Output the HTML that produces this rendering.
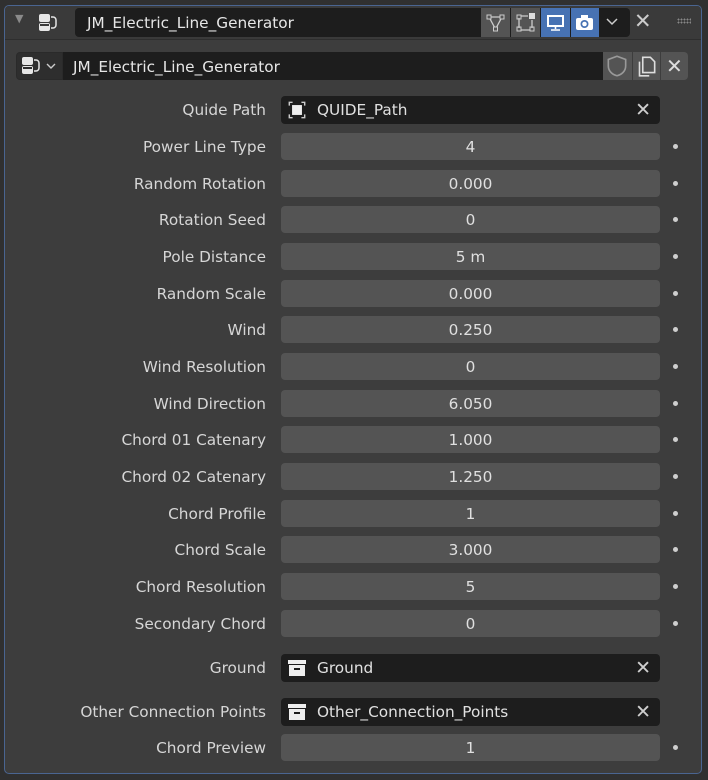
<!DOCTYPE html>
<html><head><meta charset="utf-8"><style>
*{box-sizing:border-box;margin:0;padding:0}
body{width:708px;height:780px;background:#303030;font-family:"DejaVu Sans","Liberation Sans",sans-serif;font-size:15.3px;color:#dcdcdc;position:relative;overflow:hidden}
.a{position:absolute}
.panel{left:4px;top:5px;width:698px;height:769px;background:#3d3d3d;border:1px solid #4a6591;border-radius:5px}
.hdr{left:5px;top:6px;width:696px;height:34px;background:#3a3a3a;border-bottom:1px solid #2e2e2e;border-radius:4px 4px 0 0}
.dark{background:#1d1d1d;border-radius:4px}
.btn{background:#545454}
.blue{background:#4772b3}
.lbl{position:absolute;right:442px;text-align:right;white-space:nowrap;color:#d6d6d6;line-height:29px}
.fld{position:absolute;left:281px;width:379px;height:27px;background:#545454;border-radius:4px;text-align:center;line-height:29px;color:#e0e0e0}
.dot{position:absolute;left:673px;width:5px;height:5px;border-radius:50%;background:#cfcfcf}
.tf{position:absolute;left:281px;width:379px;height:28px;background:#1d1d1d;border-radius:4px;line-height:29px;padding-left:36px;color:#e0e0e0}
.x{position:absolute;right:9px;top:0;color:#cfcfcf;font-size:19px;line-height:28px}
</style></head><body>
<div class="a panel"></div>
<div class="a hdr"></div>
<div class="a" style="left:15px;top:12px;color:#8a8a8a;font-size:11px">▼</div>
<svg class="a" style="left:36px;top:11px" width="24" height="24" viewBox="0 0 24 24"><rect x="3" y="3" width="11" height="8" rx="2" fill="#e6e6e6"/><rect x="3" y="12" width="11" height="8" rx="2" fill="#e6e6e6"/><rect x="4" y="13" width="9" height="2" fill="#3a3a3a"/><path d="M15 6h2a3 3 0 0 1 3 3v5a3 3 0 0 1-3 3h-2" stroke="#e6e6e6" stroke-width="1.5" fill="none"/></svg>
<div class="a dark" style="left:75px;top:8px;width:555px;height:29px;"></div>
<div class="a" style="left:87px;top:9px;line-height:29px;color:#e6e6e6">JM_Electric_Line_Generator</div>
<div class="a btn" style="left:481px;top:8px;width:29px;height:29px"></div>
<svg class="a" style="left:483px;top:10px" width="25" height="25" viewBox="0 0 25 25"><path d="M6 7L19 7L12.5 19Z" stroke="#ccc" stroke-width="1.3" fill="none"/><rect x="4" y="5" width="4" height="4" fill="#545454" stroke="#ccc"/><rect x="17" y="5" width="4" height="4" fill="#545454" stroke="#ccc"/><rect x="10.5" y="17" width="4" height="4" fill="#545454" stroke="#ccc"/></svg>
<div class="a btn" style="left:511px;top:8px;width:29px;height:29px"></div>
<svg class="a" style="left:513px;top:10px" width="25" height="25" viewBox="0 0 25 25"><path d="M6 8V18M8 20H17M8 6H15M19 10V18" stroke="#ccc" stroke-width="1.3"/><rect x="4" y="5" width="4" height="4" fill="none" stroke="#ccc"/><rect x="4" y="17" width="4" height="4" fill="none" stroke="#ccc"/><rect x="17" y="17" width="4" height="4" fill="none" stroke="#ccc"/><rect x="16" y="3" width="6" height="6" fill="#ddd"/></svg>
<div class="a blue" style="left:541px;top:8px;width:29px;height:29px"></div>
<svg class="a" style="left:543px;top:10px" width="25" height="25" viewBox="0 0 25 25"><rect x="5" y="6" width="15" height="10" fill="none" stroke="#fff" stroke-width="2"/><path d="M12.5 16v3M8 20h9" stroke="#fff" stroke-width="1.6"/></svg>
<div class="a blue" style="left:571px;top:8px;width:28px;height:29px"></div>
<svg class="a" style="left:572px;top:10px" width="25" height="25" viewBox="0 0 25 25"><rect x="4" y="8" width="17" height="12" rx="2" fill="#fff"/><rect x="9" y="5" width="7" height="4" fill="#fff"/><circle cx="12.5" cy="14" r="4" fill="#4772b3"/><circle cx="12.5" cy="14" r="2.3" fill="#fff"/></svg>
<svg class="a" style="left:604px;top:15px" width="16" height="14" viewBox="0 0 16 14"><path d="M3 4l5 5 5-5" stroke="#ccc" stroke-width="1.5" fill="none"/></svg>
<div class="a" style="left:634px;top:9px;font-size:21px;color:#ccc">✕</div>
<div class="a" style="left:677px;top:18px;width:14px;height:6px;background-image:radial-gradient(#888 45%,transparent 50%);background-size:3px 3px"></div>

<div class="a" style="left:16px;top:52px;width:47px;height:28px;background:#2e2e2e;border-radius:4px 0 0 4px;border:1px solid #2a2a2a"></div>
<svg class="a" style="left:19px;top:54px" width="24" height="24" viewBox="0 0 24 24"><rect x="3" y="3" width="11" height="8" rx="2" fill="#e6e6e6"/><rect x="3" y="12" width="11" height="8" rx="2" fill="#e6e6e6"/><rect x="4" y="13" width="9" height="2" fill="#2e2e2e"/><path d="M15 6h2a3 3 0 0 1 3 3v5a3 3 0 0 1-3 3h-2" stroke="#e6e6e6" stroke-width="1.5" fill="none"/></svg>
<svg class="a" style="left:45px;top:60px" width="12" height="12" viewBox="0 0 12 12"><path d="M2 4l4 4 4-4" stroke="#ccc" stroke-width="1.4" fill="none"/></svg>
<div class="a" style="left:63px;top:52px;width:540px;height:28px;background:#1d1d1d"></div>
<div class="a" style="left:73px;top:53px;line-height:28px;color:#e6e6e6">JM_Electric_Line_Generator</div>
<div class="a btn" style="left:603px;top:52px;width:29px;height:28px"></div>
<svg class="a" style="left:604px;top:53px" width="26" height="26" viewBox="0 0 24 24"><path d="M12 3L20 6V12C20 17 16 20 12 21C8 20 4 17 4 12V6Z" stroke="#999" stroke-width="1.5" fill="none"/></svg>
<div class="a btn" style="left:633px;top:52px;width:27px;height:28px"></div>
<svg class="a" style="left:633px;top:53px" width="26" height="26" viewBox="0 0 24 24"><path d="M9 4h7l4 4v10h-11z" stroke="#ddd" stroke-width="1.5" fill="none"/><path d="M6 8v13h9" stroke="#ddd" stroke-width="1.5" fill="none"/></svg>
<div class="a btn" style="left:661px;top:52px;width:27px;height:28px;border-radius:0 4px 4px 0"></div>
<div class="a" style="left:666px;top:54px;font-size:20px;color:#ddd">✕</div>

<div class="lbl" style="top:96px">Quide Path</div>
<div class="tf" style="top:96px">QUIDE_Path<span class="x">✕</span></div>
<svg class="a" style="left:286px;top:99px" width="22" height="22" viewBox="0 0 20 20"><path d="M3 6V3h3M14 3h3v3M17 14v3h-3M6 17H3v-3" stroke="#ccc" stroke-width="1.3" fill="none"/><rect x="5.5" y="5.5" width="9" height="9" fill="#eee"/></svg>

<div class="lbl" style="top:133px">Power Line Type</div><div class="fld" style="top:133px">4</div><div class="dot" style="top:144px"></div>
<div class="lbl" style="top:170px">Random Rotation</div><div class="fld" style="top:170px">0.000</div><div class="dot" style="top:181px"></div>
<div class="lbl" style="top:206px">Rotation Seed</div><div class="fld" style="top:206px">0</div><div class="dot" style="top:217px"></div>
<div class="lbl" style="top:243px">Pole Distance</div><div class="fld" style="top:243px">5 m</div><div class="dot" style="top:254px"></div>
<div class="lbl" style="top:280px">Random Scale</div><div class="fld" style="top:280px">0.000</div><div class="dot" style="top:291px"></div>
<div class="lbl" style="top:316px">Wind</div><div class="fld" style="top:316px">0.250</div><div class="dot" style="top:327px"></div>
<div class="lbl" style="top:353px">Wind Resolution</div><div class="fld" style="top:353px">0</div><div class="dot" style="top:364px"></div>
<div class="lbl" style="top:390px">Wind Direction</div><div class="fld" style="top:390px">6.050</div><div class="dot" style="top:401px"></div>
<div class="lbl" style="top:426px">Chord 01 Catenary</div><div class="fld" style="top:426px">1.000</div><div class="dot" style="top:437px"></div>
<div class="lbl" style="top:463px">Chord 02 Catenary</div><div class="fld" style="top:463px">1.250</div><div class="dot" style="top:474px"></div>
<div class="lbl" style="top:500px">Chord Profile</div><div class="fld" style="top:500px">1</div><div class="dot" style="top:511px"></div>
<div class="lbl" style="top:536px">Chord Scale</div><div class="fld" style="top:536px">3.000</div><div class="dot" style="top:547px"></div>
<div class="lbl" style="top:573px">Chord Resolution</div><div class="fld" style="top:573px">5</div><div class="dot" style="top:584px"></div>
<div class="lbl" style="top:610px">Secondary Chord</div><div class="fld" style="top:610px">0</div><div class="dot" style="top:621px"></div>

<div class="lbl" style="top:654px">Ground</div>
<div class="tf" style="top:654px">Ground<span class="x">✕</span></div>
<svg class="a" style="left:287px;top:658px" width="20" height="20" viewBox="0 0 20 20"><rect x="1" y="2" width="18" height="4" fill="#eee"/><rect x="2" y="7" width="16" height="11" fill="#eee"/><rect x="7" y="10" width="6" height="2" fill="#1d1d1d"/></svg>
<div class="lbl" style="top:698px">Other Connection Points</div>
<div class="tf" style="top:698px">Other_Connection_Points<span class="x">✕</span></div>
<svg class="a" style="left:287px;top:702px" width="20" height="20" viewBox="0 0 20 20"><rect x="1" y="2" width="18" height="4" fill="#eee"/><rect x="2" y="7" width="16" height="11" fill="#eee"/><rect x="7" y="10" width="6" height="2" fill="#1d1d1d"/></svg>
<div class="lbl" style="top:734px">Chord Preview</div><div class="fld" style="top:734px">1</div><div class="dot" style="top:745px"></div>
</body></html>
